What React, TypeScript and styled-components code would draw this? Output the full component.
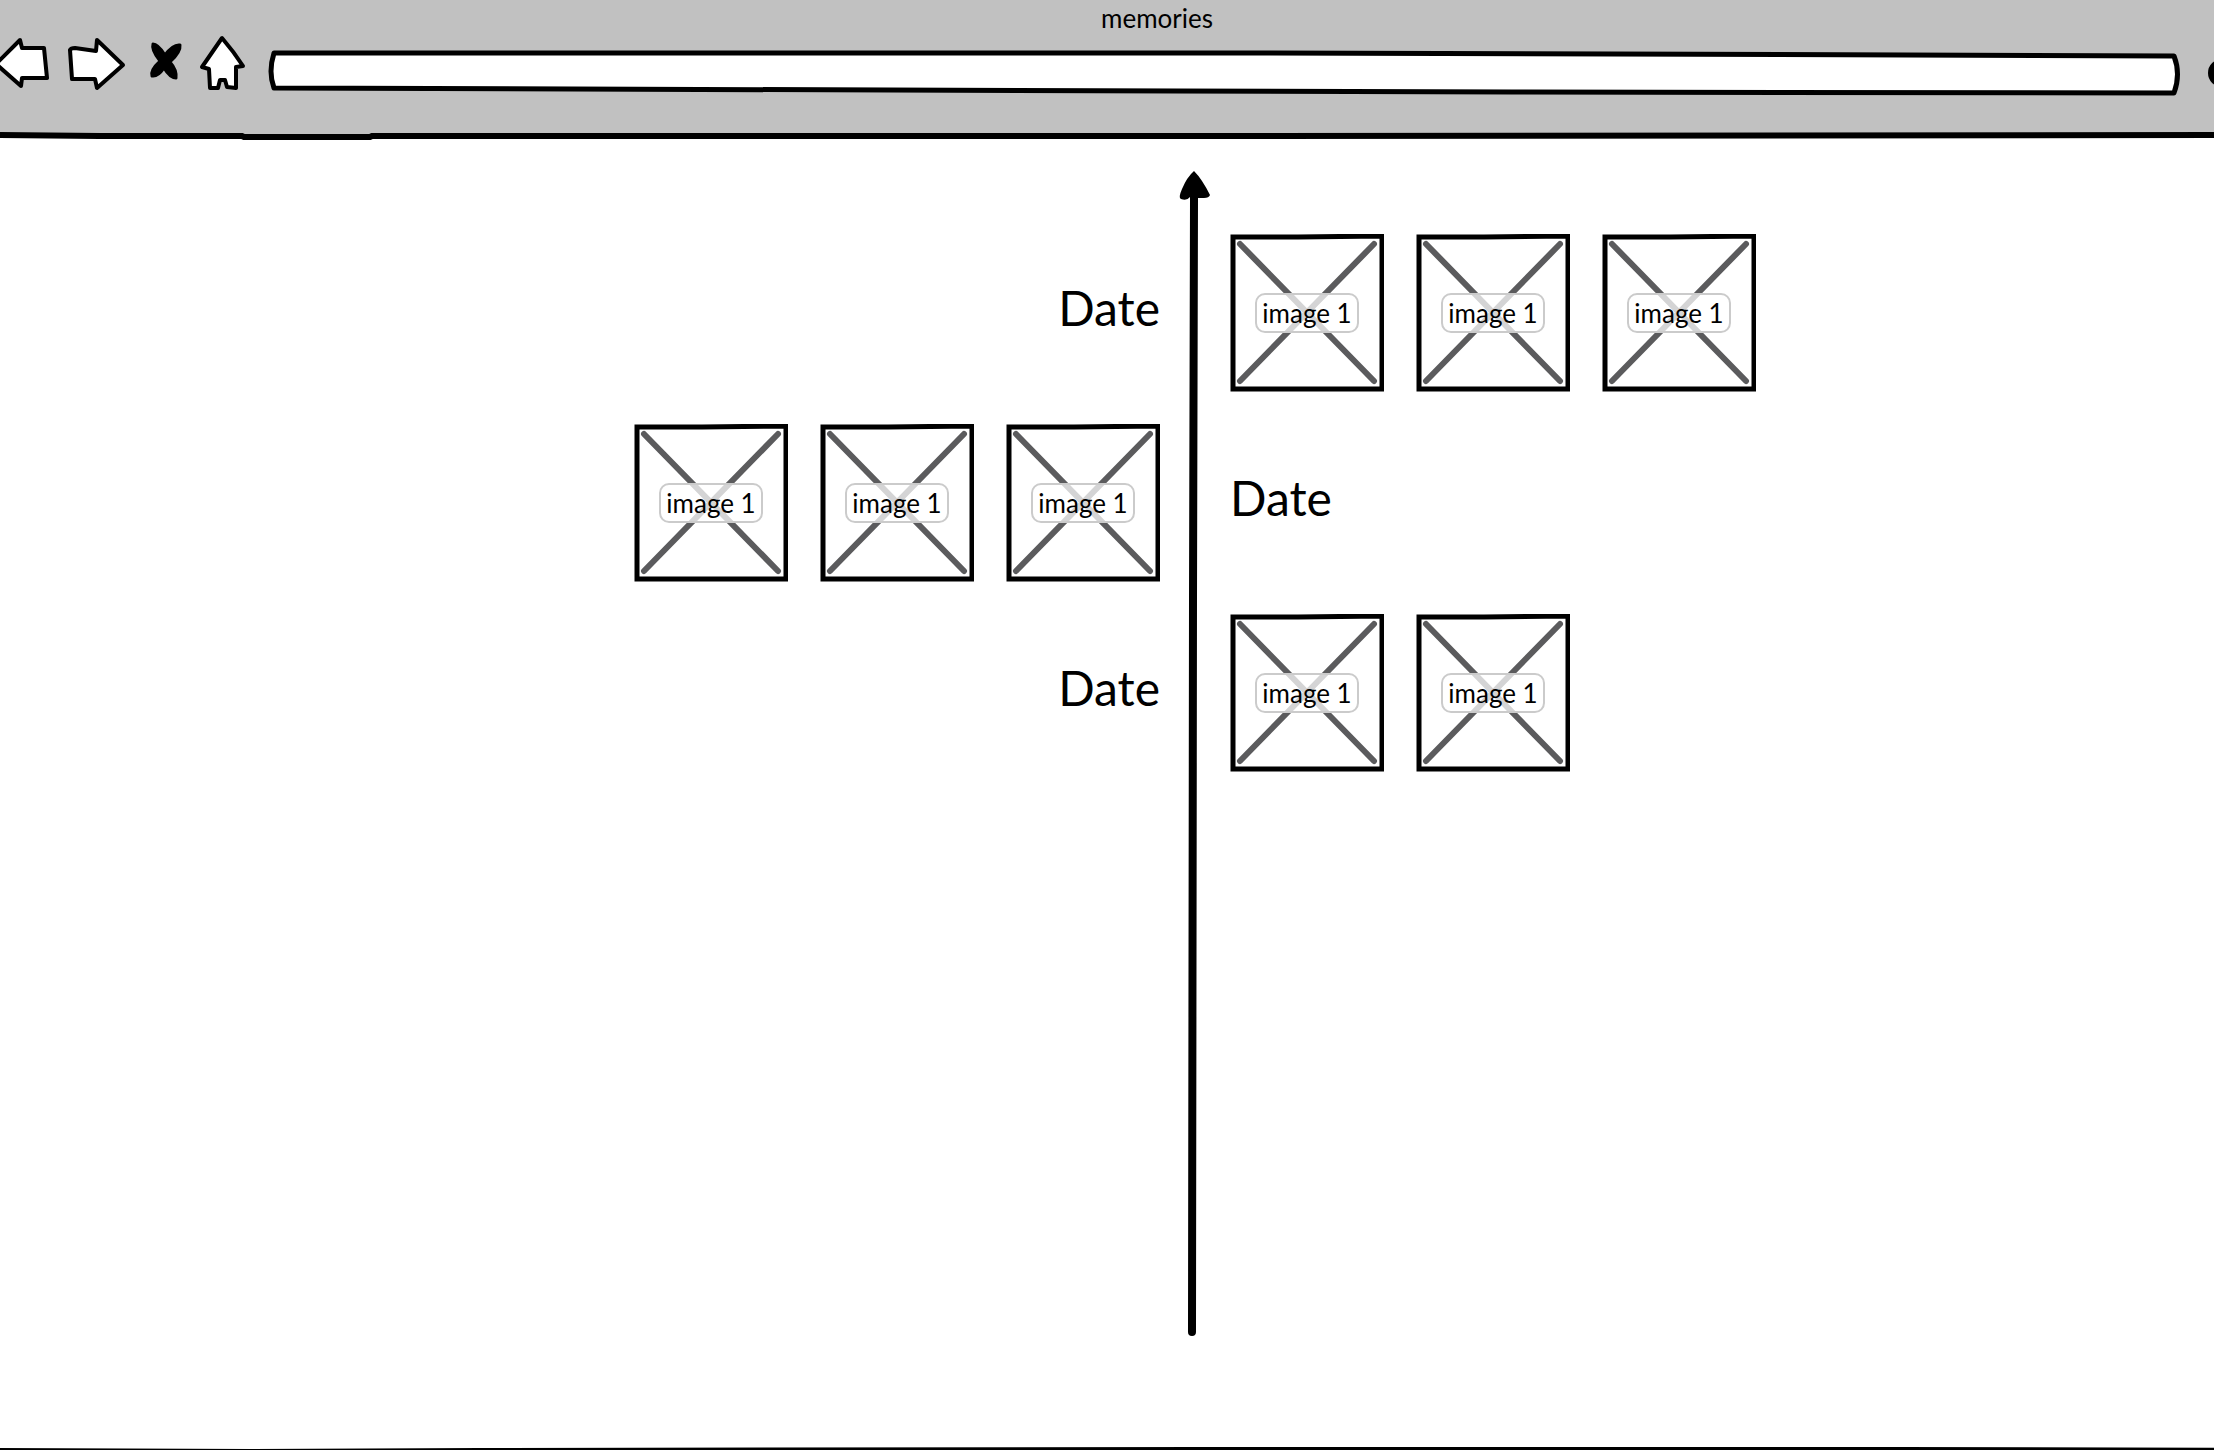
import React from 'react';
import styled, { createGlobalStyle } from 'styled-components';

const ink = '#000000';
const chrome = '#c1c1c1';
const paper = '#ffffff';

const GlobalStyle = createGlobalStyle`
  *, *::before, *::after { box-sizing: border-box; }
  body {
    margin: 0;
    overflow-x: hidden;
    background: ${paper};
    color: ${ink};
    font-family: Lato, 'Open Sans', sans-serif;
    font-size: 26px;
    line-height: 32px;
  }
`;

/* The mocked browser window runs past the right edge of the page. */
const BrowserWindow = styled.div`
  display: flex;
  flex-direction: column;
  width: calc(100% + 100px);
  min-height: 100vh;
`;

const Header = styled.header`
  background: ${chrome};
`;

const Title = styled.h1`
  margin: 0;
  font-size: 26px;
  font-weight: 400;
  line-height: 36px;
  text-align: center;
`;

const Toolbar = styled.nav`
  display: flex;
  align-items: center;
  gap: 16px;
  padding: 0 62px 40px 0;
`;

const IconButton = styled.button<{ $width: number }>`
  flex: none;
  width: ${({ $width }) => $width}px;
  height: 56px;
  padding: 0;
  border: 0;
  background: none;
  cursor: pointer;

  svg {
    display: block;
    width: 100%;
    height: 100%;
    overflow: visible;
    fill: #ffffff;
    stroke: ${ink};
    stroke-width: 4;
    stroke-linejoin: round;
    stroke-linecap: round;
  }
`;

const AddressBar = styled.div`
  position: relative;
  flex: 1;
  height: 56px;
`;

const AddressOutline = styled.svg`
  position: absolute;
  inset: 0;
  width: 100%;
  height: 100%;
  overflow: visible;
  fill: #ffffff;
  stroke: ${ink};
  stroke-width: 5;
  stroke-linejoin: round;
`;

const AddressInput = styled.input`
  position: relative;
  display: block;
  width: 100%;
  height: 100%;
  padding: 0 24px;
  border: 0;
  outline: 0;
  background: transparent;
  font: inherit;
`;

const Rule = styled.svg<{ $height: number }>`
  display: block;
  flex: none;
  width: 100%;
  height: ${({ $height }) => $height}px;
  fill: none;
  stroke: ${ink};
`;

const Timeline = styled.main<{ $rows: number }>`
  flex: 1;
  display: grid;
  grid-template-columns: minmax(0, 1fr) 70px minmax(0, 1fr);
  grid-template-rows: 32px repeat(${({ $rows }) => $rows}, 158px) 1fr;
  row-gap: 32px;
  padding: 30px 0 110px 76px;
`;

const Axis = styled.div`
  grid-column: 2;
  grid-row: 1 / -1;
  display: flex;
  flex-direction: column;
`;

const AxisHead = styled.svg`
  display: block;
  flex: none;
  width: 70px;
  height: 30px;
  overflow: visible;
`;

const AxisShaft = styled.svg`
  display: block;
  flex: 1;
  width: 70px;
  min-height: 0;
  fill: none;
  stroke: ${ink};
  stroke-width: 8;
  stroke-linecap: round;
`;

type Side = 'left' | 'right';

const Cell = styled.div<{ $side: Side; $row: number }>`
  grid-column: ${({ $side }) => ($side === 'left' ? 1 : 3)};
  grid-row: ${({ $row }) => $row};
  display: flex;
  align-items: center;
  justify-content: ${({ $side }) => ($side === 'left' ? 'flex-end' : 'flex-start')};
  gap: 32px;
`;

const DateLabel = styled.h2`
  margin: 0;
  padding-bottom: 10px;
  font-size: 48px;
  font-weight: 400;
  line-height: 56px;
`;

const Picture = styled.figure`
  position: relative;
  flex: none;
  display: grid;
  place-items: center;
  width: 154px;
  height: 158px;
  margin: 0;
`;

const PictureFrame = styled.svg`
  position: absolute;
  inset: 0;
  width: 100%;
  height: 100%;
  fill: none;
`;

const Caption = styled.figcaption`
  position: relative;
  width: 104px;
  border: 2px solid #cbcbcb;
  border-radius: 10px;
  background: rgba(255, 255, 255, 0.74);
  line-height: 36px;
  text-align: center;
  white-space: nowrap;
`;

function ImagePlaceholder({ label }: { label: string }) {
  return (
    <Picture>
      <PictureFrame viewBox="0 0 154 158" aria-hidden="true">
        <path d="M10 10 L144 147 M144 10 L10 147" stroke="#5b5b5d" strokeWidth="6" strokeLinecap="round" />
        <path d="M3 3 L68 3 L152 2 L152 155 L30 155 L3 155 Z" stroke={ink} strokeWidth="5" />
      </PictureFrame>
      <Caption>{label}</Caption>
    </Picture>
  );
}

const entries: { dateSide: Side; date: string; images: string[] }[] = [
  { dateSide: 'left', date: 'Date', images: ['image 1', 'image 1', 'image 1'] },
  { dateSide: 'right', date: 'Date', images: ['image 1', 'image 1', 'image 1'] },
  { dateSide: 'left', date: 'Date', images: ['image 1', 'image 1'] },
];

export default function App() {
  return (
    <>
      <GlobalStyle />
      <BrowserWindow>
        <Header>
          <Title>memories</Title>
          <Toolbar aria-label="Browser">
            <IconButton $width={50} aria-label="Back">
              <svg viewBox="0 0 50 56">
                <path d="M-4 28 L20 4 L22 12 L44 12 L47 42 L22 42 L21 50 Z" />
              </svg>
            </IconButton>
            <IconButton $width={62} aria-label="Forward">
              <svg viewBox="0 0 62 56">
                <path d="M4 14 Q5 12 9 12 L30 15 L31 4 L57 29 L31 52 L29 43 L6 43 Z" />
              </svg>
            </IconButton>
            <IconButton $width={40} aria-label="Stop">
              <svg viewBox="0 0 40 56">
                <path
                  d="M9 8 Q14 8 21 19 Q29 8 36 9 Q37 16 26 26 Q33 34 32 42 Q26 42 20 32 Q14 41 8 40 Q6 34 16 25 Q7 14 9 8 Z"
                  fill={ink}
                  strokeWidth="3"
                />
              </svg>
            </IconButton>
            <IconButton $width={46} aria-label="Home">
              <svg viewBox="0 0 46 56">
                <path d="M22 2 L2 31 L9 33 L10 52 L18 52 L20 44 L25 44 L27 51 L36 52 L36 31 L43 30 Q34 16 22 2 Z" />
              </svg>
            </IconButton>
            <AddressBar>
              <AddressOutline viewBox="0 0 1924 56" preserveAspectRatio="none" aria-hidden="true">
                <path d="M12 17 L985 17 L1350 18 L1912 20 Q1919 38 1912 57 L1250 56 L915 55 L12 52 Q6 36 12 17 Z" />
              </AddressOutline>
              <AddressInput type="text" aria-label="Address" />
            </AddressBar>
            <IconButton $width={50} aria-label="Search">
              <svg viewBox="0 0 50 56">
                <circle cx="20" cy="37" r="12" fill={ink} />
                <path d="M29 46 L42 56" />
              </svg>
            </IconButton>
          </Toolbar>
          <Rule $height={8} viewBox="0 0 2314 8" preserveAspectRatio="none" aria-hidden="true">
            <path d="M0 4 H2314 V8 H0 Z" fill={paper} stroke="none" />
            <path d="M0 3 L100 4 L242 4 L244 5 L370 5 L372 4 L1250 4 L2314 3" strokeWidth="6" />
          </Rule>
        </Header>

        <Timeline $rows={entries.length}>
          <Axis aria-hidden="true">
            <AxisHead viewBox="0 0 70 30">
              <path
                d="M34 1 Q42 9 50 25 Q49 28 44 28 L38 28 L38 32 L30 32 L30 27 Q27 31 21 29 Q18 28 22 19 Q27 7 34 1 Z"
                fill={ink}
              />
            </AxisHead>
            <AxisShaft viewBox="0 0 70 1136" preserveAspectRatio="none">
              <path d="M34 0 L33 400 L32 1132" />
            </AxisShaft>
          </Axis>
          {entries.map((entry, index) => (
            <React.Fragment key={index}>
              <Cell $side={entry.dateSide} $row={index + 2}>
                <DateLabel>{entry.date}</DateLabel>
              </Cell>
              <Cell $side={entry.dateSide === 'left' ? 'right' : 'left'} $row={index + 2}>
                {entry.images.map((label, i) => (
                  <ImagePlaceholder key={i} label={label} />
                ))}
              </Cell>
            </React.Fragment>
          ))}
        </Timeline>

        <Rule $height={4} viewBox="0 0 2314 4" preserveAspectRatio="none" aria-hidden="true">
          <path d="M0 4 L250 5 L480 4 L1200 3 L1900 3 L2314 4" strokeWidth="4" />
        </Rule>
      </BrowserWindow>
    </>
  );
}
